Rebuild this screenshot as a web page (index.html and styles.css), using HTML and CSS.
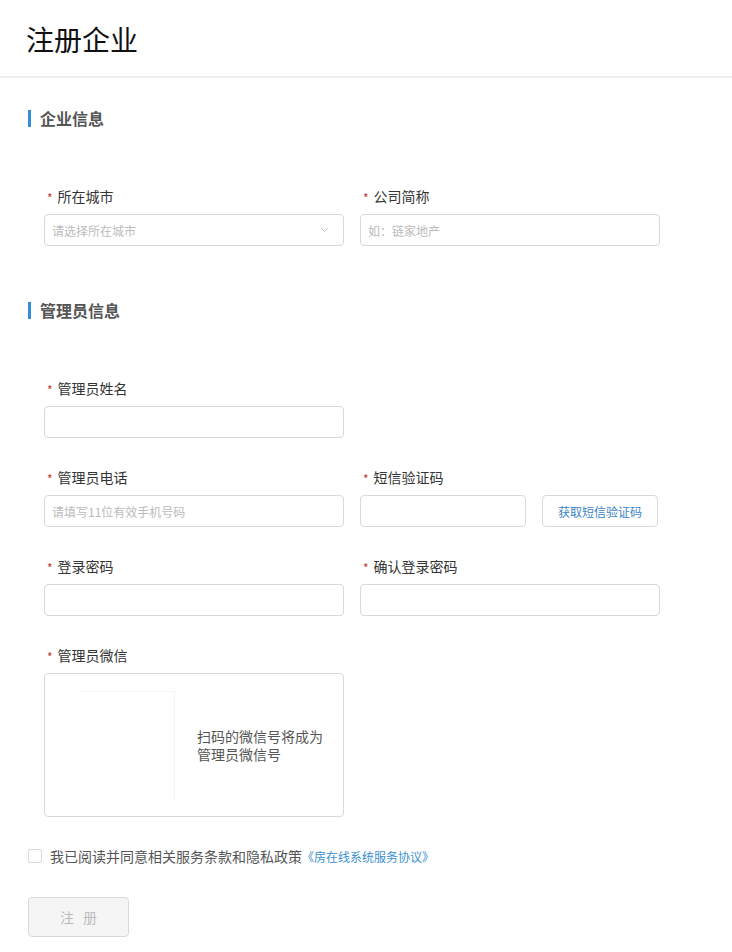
FILE: index.html
```html
<!DOCTYPE html>
<html lang="zh-CN">
<head>
<meta charset="utf-8">
<title>注册企业</title>
<link rel="stylesheet" href="styles.css">
</head>
<body>
<header class="page-header">
  <h1 class="page-title">注册企业</h1>
</header>
<main class="page-body">
  <section class="section">
    <h2 class="section-title">企业信息</h2>
    <div class="row">
      <div class="item">
        <label class="label"><span class="req">*</span>所在城市</label>
        <div class="input select">
          <span class="ph">请选择所在城市</span>
          <svg class="arrow" width="9" height="6" viewBox="0 0 9 6"><path d="M1 1l3.5 3.5L8 1" fill="none" stroke="#c0c0c0" stroke-width="1"/></svg>
        </div>
      </div>
      <div class="item">
        <label class="label"><span class="req">*</span>公司简称</label>
        <div class="input"><span class="ph">如：链家地产</span></div>
      </div>
    </div>
  </section>

  <section class="section section-last">
    <h2 class="section-title">管理员信息</h2>
    <div class="row">
      <div class="item">
        <label class="label"><span class="req">*</span>管理员姓名</label>
        <div class="input"></div>
      </div>
    </div>
    <div class="row">
      <div class="item">
        <label class="label"><span class="req">*</span>管理员电话</label>
        <div class="input"><span class="ph">请填写11位有效手机号码</span></div>
      </div>
      <div class="item">
        <label class="label"><span class="req">*</span>短信验证码</label>
        <div class="sms">
          <div class="input sms-input"></div>
          <button class="sms-btn" type="button">获取短信验证码</button>
        </div>
      </div>
    </div>
    <div class="row">
      <div class="item">
        <label class="label"><span class="req">*</span>登录密码</label>
        <div class="input"></div>
      </div>
      <div class="item">
        <label class="label"><span class="req">*</span>确认登录密码</label>
        <div class="input"></div>
      </div>
    </div>
    <div class="row">
      <div class="item">
        <label class="label"><span class="req">*</span>管理员微信</label>
        <div class="wechat">
          <div class="qr"></div>
          <p class="wechat-tip">扫码的微信号将成为<br>管理员微信号</p>
        </div>
      </div>
    </div>
  </section>

  <div class="agree">
    <span class="checkbox"></span>
    <span class="agree-text">我已阅读并同意相关服务条款和隐私政策</span>
    <a class="agree-link">《房在线系统服务协议》</a>
  </div>

  <button class="submit" type="button">注 册</button>
</main>
</body>
</html>
```

FILE: styles.css
```css
* { box-sizing: border-box; }
html, body { margin: 0; padding: 0; background: #fff; }
body {
  font-family: "Noto Sans CJK SC", "Microsoft YaHei", sans-serif;
  color: #333;
  width: 732px;
}
.page-header {
  height: 78px;
  border-bottom: 2px solid #eeeeee;
  padding: 19px 0 0 26px;
}
.page-title {
  margin: 0;
  font-size: 28px;
  font-weight: 400;
  line-height: 40px;
  color: #111;
}
.page-body {
  padding: 32px 0 0 28px;
}
.section { margin-bottom: 27px; }
.section-last { margin-bottom: 0; }
.section-title {
  margin: 0 0 59px;
  border-left: 3px solid #3290d0;
  padding-left: 9px;
  font-size: 16px;
  line-height: 17px;
  height: 17px;
  font-weight: 700;
  color: #555;
}
.row {
  display: flex;
  gap: 16px;
  padding-left: 16px;
}
.item {
  width: 300px;
  margin-bottom: 29px;
}
.label {
  display: flex;
  align-items: center;
  height: 20px;
  margin-bottom: 8px;
  font-size: 14px;
  color: #333;
  padding-left: 3px;
}
.req {
  color: #c0392b;
  font-size: 12px;
  margin-right: 5px;
  line-height: 12px;
  padding-top: 3px;
}
.input {
  height: 32px;
  border: 1px solid #d9d9d9;
  border-radius: 4px;
  display: flex;
  align-items: center;
  padding: 0 10px 0 7px;
}
.select { justify-content: space-between; }
.arrow { margin-right: 4px; }
.ph {
  font-size: 12px;
  color: #bbb;
}
.sms {
  display: flex;
  gap: 16px;
}
.sms-input { width: 166px; }
.sms-btn {
  width: 116px;
  height: 32px;
  border: 1px solid #d9d9d9;
  border-radius: 4px;
  background: #fff;
  color: #3a85c6;
  font-family: inherit;
  font-size: 12px;
  padding: 0;
}
.wechat {
  height: 144px;
  border: 1px solid #d9d9d9;
  border-radius: 4px;
  display: flex;
  align-items: center;
  padding-left: 35px;
}
.qr {
  width: 95px;
  height: 108px;
  border-top: 1px dotted #f0f0f0;
  border-right: 1px dotted #e8e8e8;
  margin-right: 22px;
}
.wechat-tip {
  margin: 0;
  font-size: 14px;
  line-height: 18px;
  color: #555;
}
.agree {
  display: flex;
  align-items: center;
  margin-top: 0;
  height: 20px;
}
.checkbox {
  width: 14px;
  height: 14px;
  border: 1px solid #d9d9d9;
  border-radius: 2px;
  background: #fff;
  margin-right: 8px;
}
.agree-text {
  font-size: 14px;
  color: #555;
}
.agree-link {
  font-size: 12px;
  color: #3a8fd0;
}
.submit {
  display: block;
  margin-top: 31px;
  width: 101px;
  height: 40px;
  border: 1px solid #d9d9d9;
  border-radius: 4px;
  background: #f5f5f5;
  color: #bbb;
  font-family: inherit;
  font-size: 14px;
  word-spacing: 6px;
  padding: 0;
}
```
